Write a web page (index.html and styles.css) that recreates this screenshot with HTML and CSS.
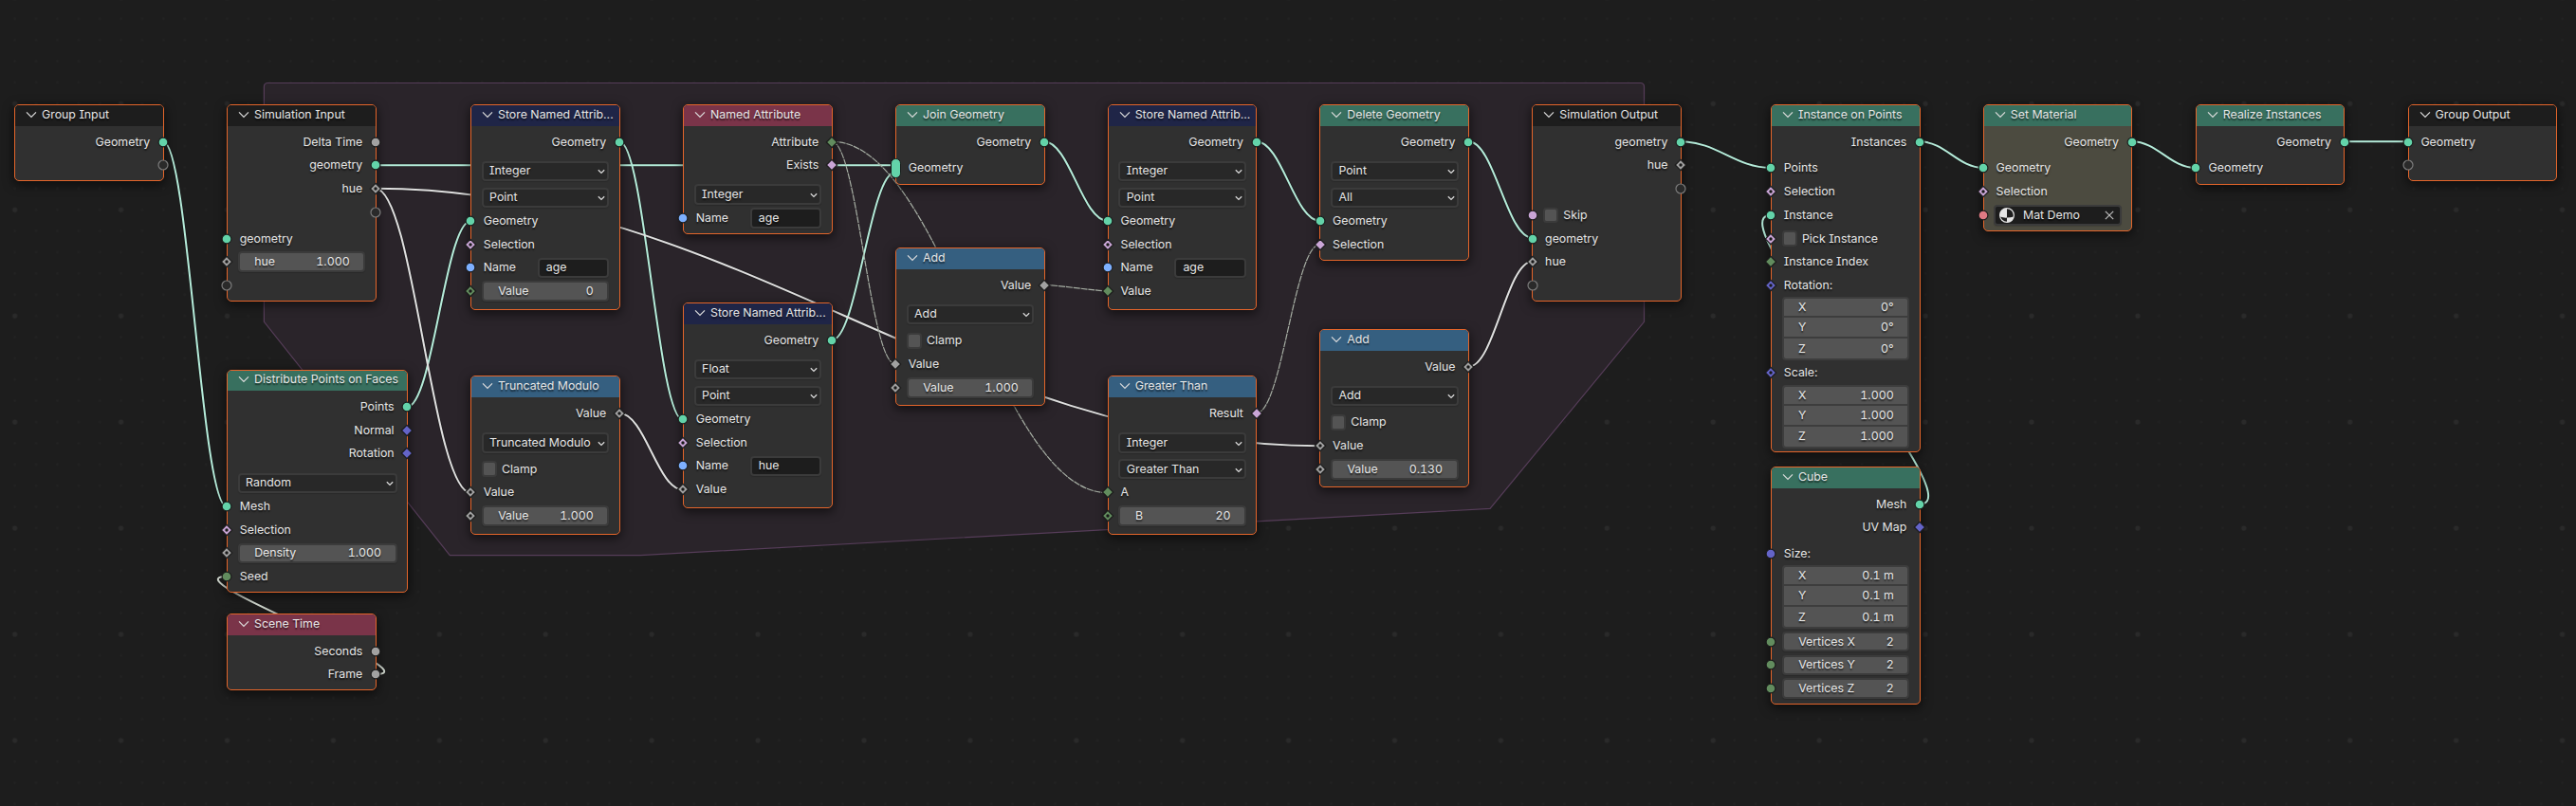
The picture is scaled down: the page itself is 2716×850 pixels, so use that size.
FILE: index.html
```html
<!DOCTYPE html>
<html lang="en">
<head>
<meta charset="utf-8">
<title>Geometry Nodes</title>
<link rel="stylesheet" href="styles.css">
</head>
<body>
<svg class="defs" aria-hidden="true">
  <symbol id="circle" viewBox="-7 -7 14 14"><circle r="4.9" fill="currentColor" stroke="#191919" stroke-width="1.1"/></symbol>
  <symbol id="diamond" viewBox="-7 -7 14 14"><path d="M0-5.7L5.7 0 0 5.7-5.7 0Z" fill="currentColor" stroke="#191919" stroke-width="1.1"/></symbol>
  <symbol id="field" viewBox="-7 -7 14 14"><path d="M0-5.7L5.7 0 0 5.7-5.7 0Z" fill="currentColor" stroke="#191919" stroke-width="1.1"/><circle r="1.7" fill="#191919"/></symbol>
  <symbol id="virtual" viewBox="-7 -7 14 14"><circle r="5" fill="#2a2a2a" stroke="#7c7c7c" stroke-width="1.2"/></symbol>
  <symbol id="chev" viewBox="0 0 12 8"><path d="M1 1.4L6 6.4 11 1.4" fill="none" stroke="#dcdcdc" stroke-width="1.2"/></symbol>
  <symbol id="down" viewBox="0 0 8 6"><path d="M.8 1.2L4 4.4 7.2 1.2" fill="none" stroke="#d8d8d8" stroke-width="1.3"/></symbol>
</svg>

<main class="canvas">
<svg class="wires" width="2716" height="850" viewBox="0 0 2716 850">
  <defs>
    <pattern id="minor" x="4.5" y="98.1" width="22.382" height="22.382" patternUnits="userSpaceOnUse"><circle cx="11.2" cy="11.2" r="1.2" fill="#222"/></pattern>
    <pattern id="major" x="-40.3" y="53.35" width="111.91" height="111.91" patternUnits="userSpaceOnUse"><circle cx="56" cy="56" r="2.6" fill="#2a2a2a"/></pattern>
  </defs>
  <rect width="2716" height="850" fill="url(#minor)"/>
  <rect width="2716" height="850" fill="url(#major)"/>
  <path class="zone" d="M278.4 91.5Q278.4 87.5 282.4 87.5H1729.5Q1733.5 87.5 1733.5 91.5V339.3L1571 536.4 675 585.6H474.3L278.4 339.3Z"/>

  <g class="wire shade">
    <path d="M172 149.3C198.8 149.3 212.2 534.3 239 534.3M395.7 174.2H944M395.7 198.7C436 198.7 456.2 519.7 496.5 519.7M395.7 198.7C775.8 198.7 1011.6 470.3 1391.7 470.3M429.3 429C456.2 429 469.6 233 496.5 233M653 149.3C679.9 149.3 693.4 443 720.3 443M653 435.7C679.9 435.7 693.4 516.7 720.3 516.7M877 358.7C903.8 358.7 917.2 181.5 944 181.5M1100.7 149.3C1127.6 149.3 1141.1 233 1168 233M1324.7 149.3C1351.5 149.3 1364.9 233 1391.7 233M1548.5 149.3C1575.4 149.3 1588.8 251 1615.7 251M1548.5 386.7C1575.4 386.7 1588.8 275.7 1615.7 275.7M1772.3 149.3C1810.3 149.3 1829.3 177 1867.3 177M2024 149.3C2050.9 149.3 2064.4 177 2091.3 177M2247.8 149.3C2274.7 149.3 2288.1 177 2315 177M2472 149.3H2539M2024 531.7C2086.7 531.7 1804.6 226.7 1867.3 226.7M396 711C458.8 711 176.2 608 239 608"/>
  </g>
  <g class="wire geo">
    <path d="M172 149.3C198.8 149.3 212.2 534.3 239 534.3"/>
    <path d="M395.7 174.2H944"/>
    <path d="M429.3 429C456.2 429 469.6 233 496.5 233"/>
    <path d="M653 149.3C679.9 149.3 693.4 443 720.3 443"/>
    <path d="M877 358.7C903.8 358.7 917.2 181.5 944 181.5"/>
    <path d="M1100.7 149.3C1127.6 149.3 1141.1 233 1168 233"/>
    <path d="M1324.7 149.3C1351.5 149.3 1364.9 233 1391.7 233"/>
    <path d="M1548.5 149.3C1575.4 149.3 1588.8 251 1615.7 251"/>
    <path d="M1772.3 149.3C1810.3 149.3 1829.3 177 1867.3 177"/>
    <path d="M2024 149.3C2050.9 149.3 2064.4 177 2091.3 177"/>
    <path d="M2247.8 149.3C2274.7 149.3 2288.1 177 2315 177"/>
    <path d="M2472 149.3H2539"/>
    <path d="M2024 531.7C2086.7 531.7 1804.6 226.7 1867.3 226.7"/>
  </g>
  <g class="wire val">
    <path d="M395.7 198.7C436 198.7 456.2 519.7 496.5 519.7"/>
    <path d="M395.7 198.7C775.8 198.7 1011.6 470.3 1391.7 470.3"/>
    <path d="M653 435.7C679.9 435.7 693.4 516.7 720.3 516.7"/>
    <path d="M1548.5 386.7C1575.4 386.7 1588.8 275.7 1615.7 275.7"/>
    <path class="int" d="M396 711C458.8 711 176.2 608 239 608"/>
  </g>
  <g class="wire dash">
    <path d="M877 149.3C903.8 149.3 917.2 384 944 384"/>
    <path d="M877 149.3C993.4 149.3 1051.6 519.7 1168 519.7"/>
    <path d="M1100.7 300.3C1110.1 300.3 1158.6 307 1168 307"/>
    <path d="M1324.7 435.7C1351.5 435.7 1364.9 257.7 1391.7 257.7"/>
  </g>
</svg>

<section class="node n-group-in black">
  <header><svg class="chev"><use href="#chev"/></svg><span>Group Input</span></header>
  <div class="body">
    <div class="row out">Geometry<svg class="sock g"><use href="#circle"/></svg></div>
    <div class="row out"><svg class="sock"><use href="#virtual"/></svg></div>
  </div>
</section>

<section class="node n-sim-in black">
  <header><svg class="chev"><use href="#chev"/></svg><span>Simulation Input</span></header>
  <div class="body">
    <div class="row out">Delta Time<svg class="sock v"><use href="#circle"/></svg></div>
    <div class="row out">geometry<svg class="sock g"><use href="#circle"/></svg></div>
    <div class="row out">hue<svg class="sock v"><use href="#field"/></svg></div>
    <div class="row out"><svg class="sock"><use href="#virtual"/></svg></div>
    <div class="row in sep"><svg class="sock g"><use href="#circle"/></svg>geometry</div>
    <div class="row in"><svg class="sock v"><use href="#field"/></svg><div class="num"><span>hue</span><span>1.000</span></div></div>
    <div class="row in"><svg class="sock"><use href="#virtual"/></svg></div>
  </div>
</section>

<section class="node n-distribute green">
  <header><svg class="chev"><use href="#chev"/></svg><span>Distribute Points on Faces</span></header>
  <div class="body">
    <div class="row out">Points<svg class="sock g"><use href="#circle"/></svg></div>
    <div class="row out">Normal<svg class="sock vec"><use href="#diamond"/></svg></div>
    <div class="row out">Rotation<svg class="sock vec"><use href="#diamond"/></svg></div>
    <div class="row wide"><div class="menu"><span>Random</span><svg><use href="#down"/></svg></div></div>
    <div class="row in"><svg class="sock g"><use href="#circle"/></svg>Mesh</div>
    <div class="row in"><svg class="sock b"><use href="#field"/></svg>Selection</div>
    <div class="row in"><svg class="sock v"><use href="#field"/></svg><div class="num"><span>Density</span><span>1.000</span></div></div>
    <div class="row in"><svg class="sock i"><use href="#circle"/></svg>Seed</div>
  </div>
</section>

<section class="node n-time red">
  <header><svg class="chev"><use href="#chev"/></svg><span>Scene Time</span></header>
  <div class="body">
    <div class="row out">Seconds<svg class="sock v"><use href="#circle"/></svg></div>
    <div class="row out">Frame<svg class="sock v"><use href="#circle"/></svg></div>
  </div>
</section>

<section class="node n-store1 navy">
  <header><svg class="chev"><use href="#chev"/></svg><span>Store Named Attrib...</span></header>
  <div class="body">
    <div class="row out">Geometry<svg class="sock g"><use href="#circle"/></svg></div>
    <div class="row wide"><div class="menu"><span>Integer</span><svg><use href="#down"/></svg></div></div>
    <div class="row sep"><div class="menu"><span>Point</span><svg><use href="#down"/></svg></div></div>
    <div class="row in"><svg class="sock g"><use href="#circle"/></svg>Geometry</div>
    <div class="row in"><svg class="sock b"><use href="#field"/></svg>Selection</div>
    <div class="row in"><svg class="sock s"><use href="#circle"/></svg>Name<div class="text">age</div></div>
    <div class="row in"><svg class="sock i"><use href="#field"/></svg><div class="num"><span>Value</span><span>0</span></div></div>
  </div>
</section>

<section class="node n-modulo blue">
  <header><svg class="chev"><use href="#chev"/></svg><span>Truncated Modulo</span></header>
  <div class="body">
    <div class="row out">Value<svg class="sock v"><use href="#field"/></svg></div>
    <div class="row wide"><div class="menu"><span>Truncated Modulo</span><svg><use href="#down"/></svg></div></div>
    <div class="row sep"><i class="box"></i>Clamp</div>
    <div class="row in"><svg class="sock v"><use href="#field"/></svg>Value</div>
    <div class="row in"><svg class="sock v"><use href="#field"/></svg><div class="num"><span>Value</span><span>1.000</span></div></div>
  </div>
</section>

<section class="node n-named red">
  <header><svg class="chev"><use href="#chev"/></svg><span>Named Attribute</span></header>
  <div class="body">
    <div class="row out">Attribute<svg class="sock i"><use href="#diamond"/></svg></div>
    <div class="row out">Exists<svg class="sock b"><use href="#diamond"/></svg></div>
    <div class="row wide"><div class="menu"><span>Integer</span><svg><use href="#down"/></svg></div></div>
    <div class="row in"><svg class="sock s"><use href="#circle"/></svg>Name<div class="text">age</div></div>
  </div>
</section>

<section class="node n-store2 navy">
  <header><svg class="chev"><use href="#chev"/></svg><span>Store Named Attrib...</span></header>
  <div class="body">
    <div class="row out">Geometry<svg class="sock g"><use href="#circle"/></svg></div>
    <div class="row wide"><div class="menu"><span>Float</span><svg><use href="#down"/></svg></div></div>
    <div class="row sep"><div class="menu"><span>Point</span><svg><use href="#down"/></svg></div></div>
    <div class="row in"><svg class="sock g"><use href="#circle"/></svg>Geometry</div>
    <div class="row in"><svg class="sock b"><use href="#field"/></svg>Selection</div>
    <div class="row in"><svg class="sock s"><use href="#circle"/></svg>Name<div class="text">hue</div></div>
    <div class="row in"><svg class="sock v"><use href="#field"/></svg>Value</div>
  </div>
</section>

<section class="node n-join green">
  <header><svg class="chev"><use href="#chev"/></svg><span>Join Geometry</span></header>
  <div class="body">
    <div class="row out">Geometry<svg class="sock g"><use href="#circle"/></svg></div>
    <div class="row in sep"><i class="multi"></i>Geometry</div>
  </div>
</section>

<section class="node n-add1 blue">
  <header><svg class="chev"><use href="#chev"/></svg><span>Add</span></header>
  <div class="body">
    <div class="row out">Value<svg class="sock v"><use href="#diamond"/></svg></div>
    <div class="row wide"><div class="menu"><span>Add</span><svg><use href="#down"/></svg></div></div>
    <div class="row sep"><i class="box"></i>Clamp</div>
    <div class="row in"><svg class="sock v"><use href="#diamond"/></svg>Value</div>
    <div class="row in"><svg class="sock v"><use href="#field"/></svg><div class="num"><span>Value</span><span>1.000</span></div></div>
  </div>
</section>

<section class="node n-store3 navy">
  <header><svg class="chev"><use href="#chev"/></svg><span>Store Named Attrib...</span></header>
  <div class="body">
    <div class="row out">Geometry<svg class="sock g"><use href="#circle"/></svg></div>
    <div class="row wide"><div class="menu"><span>Integer</span><svg><use href="#down"/></svg></div></div>
    <div class="row sep"><div class="menu"><span>Point</span><svg><use href="#down"/></svg></div></div>
    <div class="row in"><svg class="sock g"><use href="#circle"/></svg>Geometry</div>
    <div class="row in"><svg class="sock b"><use href="#field"/></svg>Selection</div>
    <div class="row in"><svg class="sock s"><use href="#circle"/></svg>Name<div class="text">age</div></div>
    <div class="row in"><svg class="sock i"><use href="#diamond"/></svg>Value</div>
  </div>
</section>

<section class="node n-greater blue">
  <header><svg class="chev"><use href="#chev"/></svg><span>Greater Than</span></header>
  <div class="body">
    <div class="row out">Result<svg class="sock b"><use href="#diamond"/></svg></div>
    <div class="row wide"><div class="menu"><span>Integer</span><svg><use href="#down"/></svg></div></div>
    <div class="row sep"><div class="menu"><span>Greater Than</span><svg><use href="#down"/></svg></div></div>
    <div class="row in"><svg class="sock i"><use href="#diamond"/></svg>A</div>
    <div class="row in"><svg class="sock i"><use href="#field"/></svg><div class="num"><span>B</span><span>20</span></div></div>
  </div>
</section>

<section class="node n-delete green">
  <header><svg class="chev"><use href="#chev"/></svg><span>Delete Geometry</span></header>
  <div class="body">
    <div class="row out">Geometry<svg class="sock g"><use href="#circle"/></svg></div>
    <div class="row wide"><div class="menu"><span>Point</span><svg><use href="#down"/></svg></div></div>
    <div class="row sep"><div class="menu"><span>All</span><svg><use href="#down"/></svg></div></div>
    <div class="row in"><svg class="sock g"><use href="#circle"/></svg>Geometry</div>
    <div class="row in"><svg class="sock b"><use href="#diamond"/></svg>Selection</div>
  </div>
</section>

<section class="node n-add2 blue">
  <header><svg class="chev"><use href="#chev"/></svg><span>Add</span></header>
  <div class="body">
    <div class="row out">Value<svg class="sock v"><use href="#field"/></svg></div>
    <div class="row wide"><div class="menu"><span>Add</span><svg><use href="#down"/></svg></div></div>
    <div class="row sep"><i class="box"></i>Clamp</div>
    <div class="row in"><svg class="sock v"><use href="#field"/></svg>Value</div>
    <div class="row in"><svg class="sock v"><use href="#field"/></svg><div class="num"><span>Value</span><span>0.130</span></div></div>
  </div>
</section>

<section class="node n-sim-out black">
  <header><svg class="chev"><use href="#chev"/></svg><span>Simulation Output</span></header>
  <div class="body">
    <div class="row out">geometry<svg class="sock g"><use href="#circle"/></svg></div>
    <div class="row out">hue<svg class="sock v"><use href="#field"/></svg></div>
    <div class="row out"><svg class="sock"><use href="#virtual"/></svg></div>
    <div class="row in sep"><svg class="sock b"><use href="#circle"/></svg><i class="box"></i>Skip</div>
    <div class="row in"><svg class="sock g"><use href="#circle"/></svg>geometry</div>
    <div class="row in"><svg class="sock v"><use href="#field"/></svg>hue</div>
    <div class="row in"><svg class="sock"><use href="#virtual"/></svg></div>
  </div>
</section>

<section class="node n-instance green">
  <header><svg class="chev"><use href="#chev"/></svg><span>Instance on Points</span></header>
  <div class="body">
    <div class="row out">Instances<svg class="sock g"><use href="#circle"/></svg></div>
    <div class="row in sep"><svg class="sock g"><use href="#circle"/></svg>Points</div>
    <div class="row in"><svg class="sock b"><use href="#field"/></svg>Selection</div>
    <div class="row in"><svg class="sock g"><use href="#circle"/></svg>Instance</div>
    <div class="row in"><svg class="sock b"><use href="#field"/></svg><i class="box"></i>Pick Instance</div>
    <div class="row in"><svg class="sock i"><use href="#diamond"/></svg>Instance Index</div>
    <div class="row in"><svg class="sock vec"><use href="#field"/></svg>Rotation:</div>
    <div class="vector">
      <div><span>X</span><span>0°</span></div>
      <div><span>Y</span><span>0°</span></div>
      <div><span>Z</span><span>0°</span></div>
    </div>
    <div class="row in"><svg class="sock vec"><use href="#field"/></svg>Scale:</div>
    <div class="vector">
      <div><span>X</span><span>1.000</span></div>
      <div><span>Y</span><span>1.000</span></div>
      <div><span>Z</span><span>1.000</span></div>
    </div>
  </div>
</section>

<section class="node n-cube green">
  <header><svg class="chev"><use href="#chev"/></svg><span>Cube</span></header>
  <div class="body">
    <div class="row out">Mesh<svg class="sock g"><use href="#circle"/></svg></div>
    <div class="row out">UV Map<svg class="sock vec"><use href="#diamond"/></svg></div>
    <div class="row in sep"><svg class="sock vec"><use href="#circle"/></svg>Size:</div>
    <div class="vector">
      <div><span>X</span><span>0.1 m</span></div>
      <div><span>Y</span><span>0.1 m</span></div>
      <div><span>Z</span><span>0.1 m</span></div>
    </div>
    <div class="row in"><svg class="sock i"><use href="#circle"/></svg><div class="num"><span>Vertices X</span><span>2</span></div></div>
    <div class="row in"><svg class="sock i"><use href="#circle"/></svg><div class="num"><span>Vertices Y</span><span>2</span></div></div>
    <div class="row in"><svg class="sock i"><use href="#circle"/></svg><div class="num"><span>Vertices Z</span><span>2</span></div></div>
  </div>
</section>

<section class="node n-material green olive">
  <header><svg class="chev"><use href="#chev"/></svg><span>Set Material</span></header>
  <div class="body">
    <div class="row out">Geometry<svg class="sock g"><use href="#circle"/></svg></div>
    <div class="row in sep"><svg class="sock g"><use href="#circle"/></svg>Geometry</div>
    <div class="row in"><svg class="sock b"><use href="#field"/></svg>Selection</div>
    <div class="row in"><svg class="sock m"><use href="#circle"/></svg>
      <div class="picker">
        <svg class="ball" viewBox="-9 -9 18 18"><circle r="7.4" fill="#1d1d1d" stroke="#e4e4e4" stroke-width="1.2"/><path d="M0-7.4A7.4 7.4 0 0 0-7.2 1.5Q-4 2.8 0 2.6Z" fill="#e4e4e4"/><path d="M0 2.6Q4 2.6 7.2 1.5A7.4 7.4 0 0 1 0 7.4Z" fill="#e4e4e4"/></svg>
        <span>Mat Demo</span>
        <svg class="close" viewBox="0 0 10 10"><path d="M.8.8L9.2 9.2M9.2.8L.8 9.2" stroke="#c4c4c4" stroke-width="1.1"/></svg>
      </div>
    </div>
  </div>
</section>

<section class="node n-realize green">
  <header><svg class="chev"><use href="#chev"/></svg><span>Realize Instances</span></header>
  <div class="body">
    <div class="row out">Geometry<svg class="sock g"><use href="#circle"/></svg></div>
    <div class="row in sep"><svg class="sock g"><use href="#circle"/></svg>Geometry</div>
  </div>
</section>

<section class="node n-group-out black">
  <header><svg class="chev"><use href="#chev"/></svg><span>Group Output</span></header>
  <div class="body">
    <div class="row in"><svg class="sock g"><use href="#circle"/></svg>Geometry</div>
    <div class="row in"><svg class="sock"><use href="#virtual"/></svg></div>
  </div>
</section>
</main>
</body>
</html>
```
FILE: styles.css
```css
* { box-sizing: border-box; }
body {
  margin: 0;
  background: #1d1d1d;
  color: #e6e6e6;
  font: 12.35px/22px Inter, "Liberation Sans", sans-serif;
  font-feature-settings: "cv08";
}
.defs { position: absolute; width: 0; height: 0; }
.canvas { position: relative; width: 2716px; height: 850px; overflow: hidden; }
.wires { display: block; }

.zone { fill: #2a242a; stroke: #563d59; stroke-width: 1.2; }
.wire { fill: none; stroke-width: 2; }
.wire.shade { stroke: #171717; stroke-width: 3.6; stroke-opacity: .5; }
.wire.geo { stroke: #b5ecda; }
.wire.val { stroke: #e0e0e0; }
.wire .int { stroke: #cfd6cd; }
.wire.dash { stroke: #a7afa4; stroke-width: 1.2; stroke-dasharray: 7 .8; }

.node {
  position: absolute;
  width: 157.6px;
  border: 1px solid #e4652a;
  border-radius: 5px;
  background: #303030;
  box-shadow: 0 3px 11px 1px rgba(0, 0, 0, .55);
}
.node header {
  display: flex;
  align-items: center;
  height: 21.5px;
  padding-left: 11px;
  padding-bottom: 1.6px;
  border-radius: 4px 4px 0 0;
  white-space: nowrap;
}
.chev { width: 12px; height: 8px; margin-right: 5px; flex: none; }
.node header span, .row, .vector { text-shadow: 0 1.5px 1.5px rgba(0, 0, 0, .6); }
.black header { background: #1d1d1d; }
.green header { background: #38705f; }
.blue header { background: #355f80; }
.navy header { background: #1f2547; }
.red header { background: #7a3449; }
.olive { background: #4c4b40; }

.body { padding-top: 5.9px; }
.row {
  position: relative;
  display: flex;
  align-items: center;
  height: 22.4px;
  margin-bottom: 2.3px;
  padding: 0 10.3px 0 10.6px;
}
.row.out { justify-content: flex-end; padding-right: 13.4px; }
.row.in { padding-left: 12.8px; }
.row.in:has(.num, .picker, .box) { padding-left: 10.6px; }
.sep { margin-top: 5.5px; }
.wide { margin-top: 8.5px; }

.sock { position: absolute; top: 4.2px; left: -7.6px; width: 14px; height: 14px; }
.out .sock { left: auto; right: -7.3px; }
.multi {
  position: absolute; left: -5.6px; top: .4px;
  width: 10.4px; height: 21.6px;
  border: 1px solid #191919; border-radius: 5.2px; background: #63d3a9;
}
.g { color: #63d3a9; }
.v { color: #a1a1a1; }
.b { color: #c9a5d6; }
.i { color: #628c5e; }
.s { color: #7db0ff; }
.vec { color: #6464c8; }
.m { color: #e07a83; }

.num, .menu, .text, .picker {
  display: flex;
  align-items: center;
  height: 21.6px;
  border: 2px solid #3b3b3b;
  border-radius: 4px;
  box-shadow: 0 1px 1px rgba(0, 0, 0, .15);
}
.num { flex: 1; justify-content: space-between; padding: 0 14.6px 0 15.6px; background: #545454; }
.num span:last-child, .vector span:last-child { font-variant-numeric: tabular-nums; }
.menu { flex: 1; justify-content: space-between; padding: 0 2px 0 6.5px; background: #282828; white-space: nowrap; }
.menu svg { width: 8px; height: 6px; margin-top: 2px; flex: none; }
.text { width: 75.6px; margin-left: auto; padding-left: 7px; background: #1d1d1d; }
.box {
  width: 16.4px; height: 16.4px; margin-right: 5px;
  border: 2px solid #3b3b3b; border-radius: 3.5px; background: #545454;
}
.picker { flex: 1; padding: 0 6px 0 2.6px; background: #1d1d1d; }
.ball { width: 18px; height: 18px; margin-right: 8px; }
.close { width: 10px; height: 10px; margin-left: auto; }

.vector {
  display: grid;
  grid-template-rows: 18px 20px 21px;
  gap: 2px;
  height: 67px;
  margin: -1.4px 10.3px 2.2px 11px;
  border: 2px solid #3d3d3d;
  border-radius: 4px;
  background: #3d3d3d;
  overflow: hidden;
}
.vector div { display: flex; align-items: center; justify-content: space-between; padding: 0 14.6px 0 15px; background: #545454; }

.n-group-in { left: 15px; top: 110px; height: 80.8px; }
.n-sim-in { left: 239px; top: 110px; height: 207.8px; }
.n-distribute { left: 239px; top: 389.5px; width: 191px; height: 235.6px; }
.n-time { left: 239px; top: 647px; height: 81px; }
.n-store1 { left: 496px; top: 110px; height: 216.8px; }
.n-modulo { left: 496px; top: 396.3px; height: 167.5px; }
.n-named { left: 720px; top: 110px; height: 136.8px; }
.n-store2 { left: 720px; top: 319px; height: 217px; }
.n-join { left: 944px; top: 110px; height: 84.8px; }
.n-add1 { left: 944px; top: 261px; height: 167.3px; }
.n-store3 { left: 1167.7px; top: 110px; height: 216.8px; }
.n-greater { left: 1167.7px; top: 396.3px; height: 167.6px; }
.n-delete { left: 1391.3px; top: 110px; height: 165px; }
.n-add2 { left: 1391.3px; top: 347px; height: 167.4px; }
.n-sim-out { left: 1615.3px; top: 110px; height: 207.8px; }
.n-instance { left: 1867px; top: 110px; height: 366.8px; }
.n-cube { left: 1867px; top: 492px; height: 251px; }
.n-material { left: 2090.8px; top: 110px; height: 134px; }
.n-realize { left: 2314.8px; top: 110px; height: 84.8px; }
.n-group-out { left: 2538.6px; top: 110px; height: 80.8px; }
```
